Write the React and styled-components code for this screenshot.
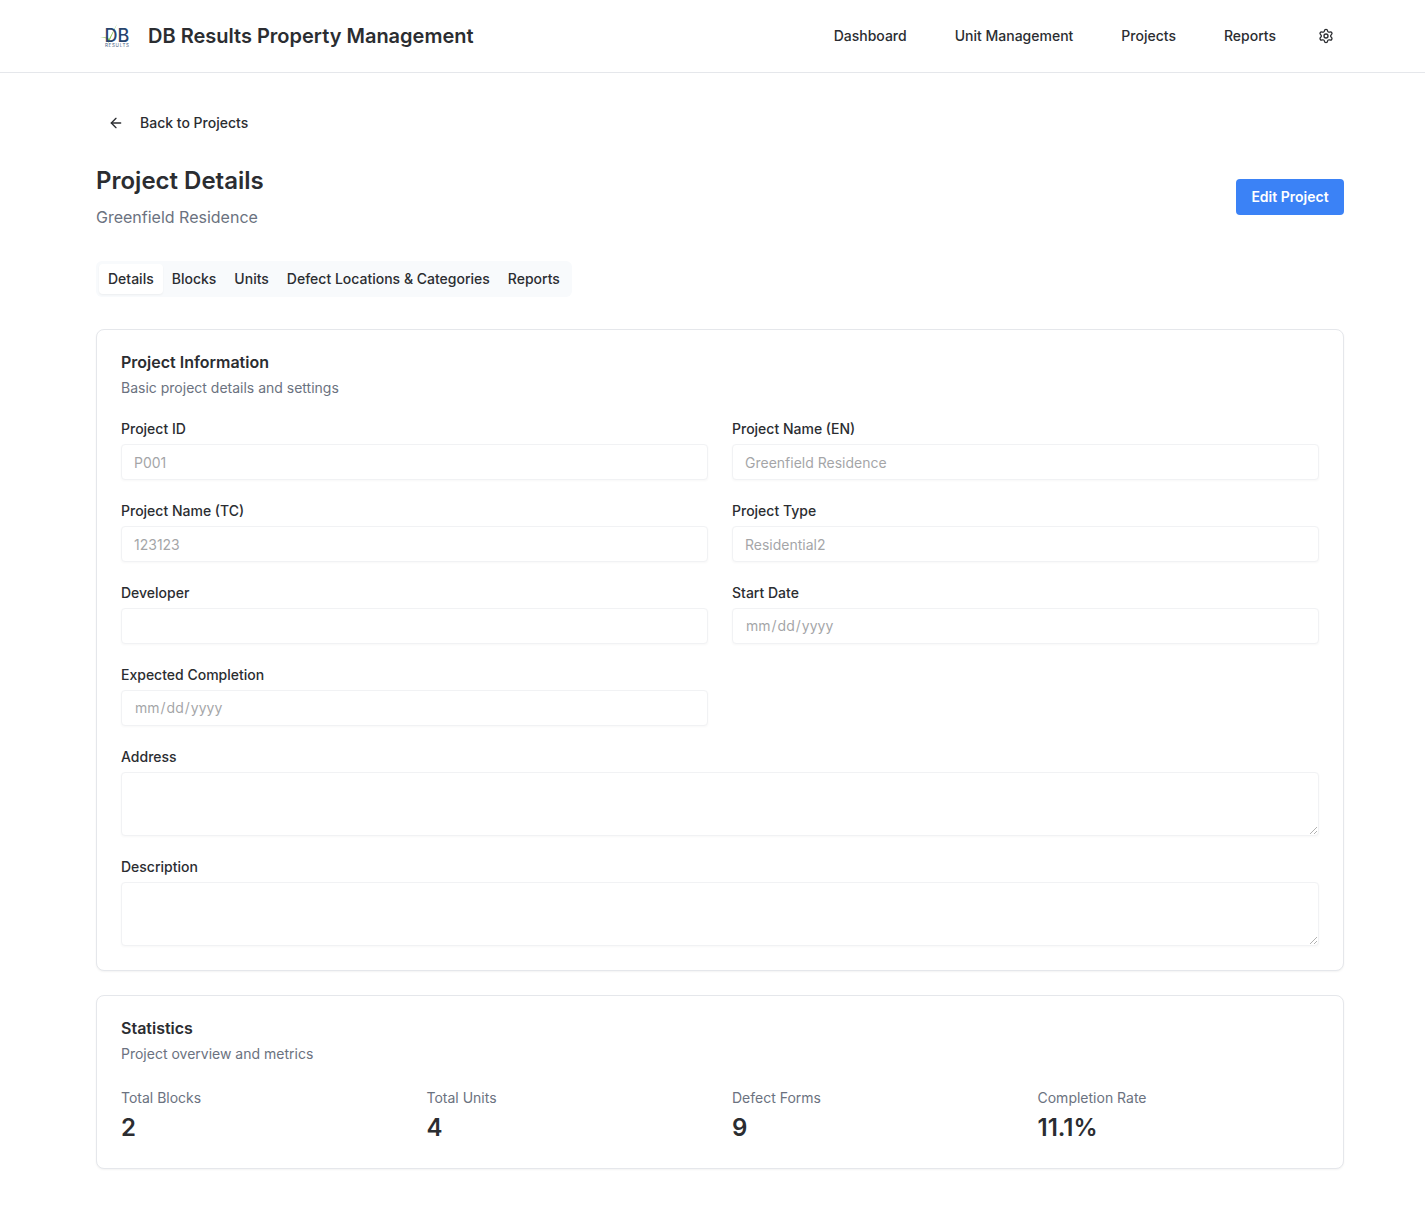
import styled, { createGlobalStyle } from 'styled-components';
import { ArrowLeft, Settings } from 'lucide-react';

const GlobalStyle = createGlobalStyle`
  * {
    box-sizing: border-box;
  }
  html, body {
    margin: 0;
    background: #fff;
    color: #2b2d31;
    font-family: Inter, "Liberation Sans", sans-serif;
  }
`;

const Header = styled.header`
  display: flex;
  align-items: center;
  justify-content: space-between;
  height: 73px;
  padding: 0 91px 0 96px;
  border-bottom: 1px solid #e5e7eb;
`;

const Brand = styled.div`
  display: flex;
  align-items: center;
  gap: 12px;
`;

const BrandName = styled.span`
  font-size: 20px;
  line-height: 28px;
  font-weight: 600;
`;

const Nav = styled.nav`
  display: flex;
  align-items: center;
  gap: 48px;
`;

const NavLink = styled.a`
  font-size: 14px;
  line-height: 20px;
  font-weight: 500;
`;

const Gear = styled(Settings)`
  margin-left: -6px;
`;

const Main = styled.main`
  width: 1248px;
  margin-left: 96px;
  padding: 32px 0 56px;
`;

const BackLink = styled.a`
  display: inline-flex;
  align-items: center;
  gap: 16px;
  height: 36px;
  padding: 0 12px;
  font-size: 14px;
  line-height: 20px;
  font-weight: 500;
`;

const TitleRow = styled.div`
  display: flex;
  align-items: center;
  justify-content: space-between;
  margin-top: 24px;
`;

const Title = styled.h1`
  margin: 0;
  font-size: 24px;
  line-height: 32px;
  font-weight: 600;
`;

const Subtitle = styled.p`
  margin: 8px 0 0;
  font-size: 16px;
  line-height: 24px;
  color: #6b7280;
`;

const EditButton = styled.button`
  width: 108px;
  height: 36px;
  padding: 0;
  border: 0;
  border-radius: 4px;
  background: #3b82f6;
  color: #fff;
  font: 600 14px/20px Inter, sans-serif;
`;

const TabList = styled.div`
  display: inline-flex;
  align-items: center;
  height: 36px;
  margin-top: 32px;
  padding: 0 3px;
  border-radius: 6px;
  background: #f8fafc;
`;

const Tab = styled.button`
  height: 30px;
  padding: 0 9px;
  border: 0;
  border-radius: 4px;
  background: ${(p) => (p.$active ? '#fff' : 'transparent')};
  box-shadow: ${(p) => (p.$active ? '0 1px 2px rgba(0, 0, 0, 0.05)' : 'none')};
  color: #2b2d31;
  font: 500 14px/20px Inter, sans-serif;
`;

const Card = styled.section`
  margin-top: ${(p) => p.$top}px;
  padding: 24px;
  border: 1px solid #e5e7eb;
  border-radius: 8px;
  background: #fff;
  box-shadow: 0 1px 2px rgba(0, 0, 0, 0.05);
`;

const CardTitle = styled.h2`
  margin: 0;
  font-size: 16px;
  line-height: 16px;
  font-weight: 600;
`;

const CardHint = styled.p`
  margin: 8px 0 0;
  font-size: 14px;
  line-height: 20px;
  color: #6b7280;
`;

const FormGrid = styled.div`
  display: grid;
  grid-template-columns: 1fr 1fr;
  gap: 24px;
  margin-top: 24px;
`;

const Field = styled.div`
  display: flex;
  flex-direction: column;
  gap: 8px;
  grid-column: ${(p) => (p.$wide ? '1 / -1' : 'auto')};
`;

const Label = styled.label`
  font-size: 14px;
  line-height: 14px;
  font-weight: 500;
`;

const Input = styled.input`
  width: 100%;
  height: 36px;
  padding: 0 12px;
  border: 1px solid #e5e7eb;
  border-radius: 4px;
  background: #fff;
  box-shadow: 0 1px 2px rgba(0, 0, 0, 0.05);
  color: #4b4d52;
  font: 14px Inter, sans-serif;
  opacity: 0.5;

  &[type='date'] {
    padding-bottom: 2px;
  }

  &::-webkit-calendar-picker-indicator {
    opacity: 0;
  }
`;

const TextArea = styled.textarea`
  display: block;
  width: 100%;
  height: 64px;
  padding: 8px 12px;
  border: 1px solid #e5e7eb;
  border-radius: 4px;
  background: #fff;
  box-shadow: 0 1px 2px rgba(0, 0, 0, 0.05);
  font: 14px Inter, sans-serif;
  opacity: 0.5;
`;

const StatsGrid = styled.div`
  display: grid;
  grid-template-columns: repeat(4, 1fr);
  gap: 24px;
  margin-top: 24px;
`;

const StatLabel = styled.div`
  font-size: 14px;
  line-height: 20px;
  color: #6b7280;
`;

const StatValue = styled.div`
  margin-top: 4px;
  font-size: 24px;
  line-height: 32px;
  font-weight: 600;
`;

const Logo = () => (
  <svg width="40" height="32" viewBox="0 0 40 32">
    <path d="M4 17 L11 18.5 L12.5 23 L21 4 L13 19 L11.5 17.5 Z" fill="#8cc152" />
    <text x="8.5" y="22" fontFamily="Inter, sans-serif" fontSize="18" fontWeight="500" fill="#27446e">DB</text>
    <text x="9" y="26.5" fontFamily="Inter, sans-serif" fontSize="4.6" textLength="24" fill="#4a6288">RESULTS</text>
  </svg>
);

const fields = [
  { label: 'Project ID', value: 'P001' },
  { label: 'Project Name (EN)', value: 'Greenfield Residence' },
  { label: 'Project Name (TC)', value: '123123' },
  { label: 'Project Type', value: 'Residential2' },
  { label: 'Developer', value: '' },
  { label: 'Start Date', type: 'date' },
  { label: 'Expected Completion', type: 'date' },
];

const tabs = ['Details', 'Blocks', 'Units', 'Defect Locations & Categories', 'Reports'];

const stats = [
  ['Total Blocks', '2'],
  ['Total Units', '4'],
  ['Defect Forms', '9'],
  ['Completion Rate', '11.1%'],
];

const App = () => (
  <>
    <GlobalStyle />
    <Header>
      <Brand>
        <Logo />
        <BrandName>DB Results Property Management</BrandName>
      </Brand>
      <Nav>
        <NavLink>Dashboard</NavLink>
        <NavLink>Unit Management</NavLink>
        <NavLink>Projects</NavLink>
        <NavLink>Reports</NavLink>
        <Gear size={16} />
      </Nav>
    </Header>
    <Main>
      <BackLink>
        <ArrowLeft size={16} />
        Back to Projects
      </BackLink>
      <TitleRow>
        <div>
          <Title>Project Details</Title>
          <Subtitle>Greenfield Residence</Subtitle>
        </div>
        <EditButton>Edit Project</EditButton>
      </TitleRow>
      <TabList>
        {tabs.map((t, i) => (
          <Tab key={t} $active={i === 0}>{t}</Tab>
        ))}
      </TabList>
      <Card $top={32}>
        <CardTitle>Project Information</CardTitle>
        <CardHint>Basic project details and settings</CardHint>
        <FormGrid>
          {fields.map((f) => (
            <Field key={f.label}>
              <Label>{f.label}</Label>
              <Input disabled type={f.type || 'text'} defaultValue={f.value} />
            </Field>
          ))}
          <Field $wide>
            <Label>Address</Label>
            <TextArea disabled />
          </Field>
          <Field $wide>
            <Label>Description</Label>
            <TextArea disabled />
          </Field>
        </FormGrid>
      </Card>
      <Card $top={24}>
        <CardTitle>Statistics</CardTitle>
        <CardHint>Project overview and metrics</CardHint>
        <StatsGrid>
          {stats.map(([label, value]) => (
            <div key={label}>
              <StatLabel>{label}</StatLabel>
              <StatValue>{value}</StatValue>
            </div>
          ))}
        </StatsGrid>
      </Card>
    </Main>
  </>
);

export default App;
